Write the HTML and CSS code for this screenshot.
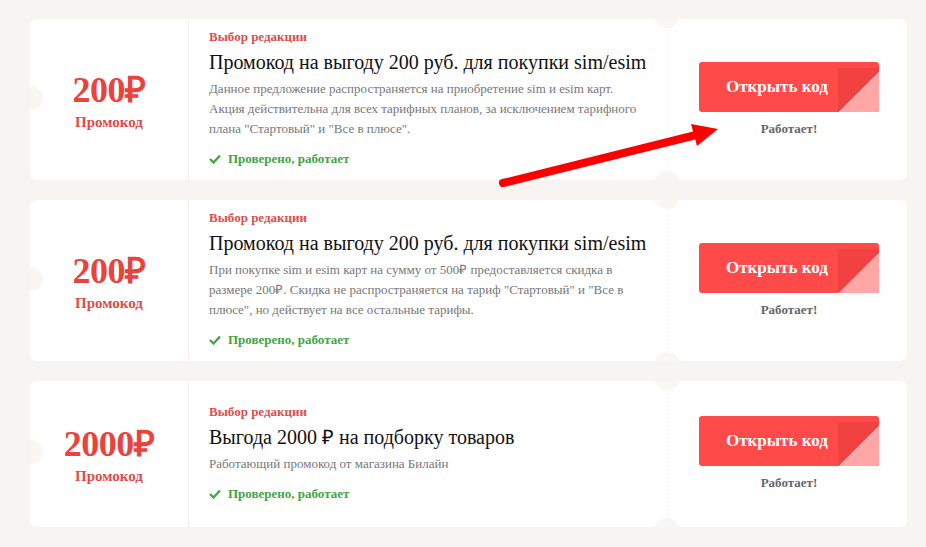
FILE: index.html
```html
<!DOCTYPE html>
<html lang="ru">
<head>
<meta charset="utf-8">
<link rel="stylesheet" href="styles.css">
</head>
<body>
<div class="list">
  <div class="card">
    <span class="notch notch-left"></span>
    <span class="notch notch-top"></span>
    <span class="notch notch-bottom"></span>
    <div class="amount">
      <div class="value">200₽</div>
      <div class="kind">Промокод</div>
    </div>
    <div class="info">
      <div class="label">Выбор редакции</div>
      <div class="title">Промокод на выгоду 200 руб. для покупки sim/esim</div>
      <div class="desc">Данное предложение распространяется на приобретение sim и esim карт. Акция действительна для всех тарифных планов, за исключением тарифного плана "Стартовый" и "Все в плюсе".</div>
      <div class="checked"><svg class="tick" viewBox="0 0 12 10" width="12" height="10"><polyline points="1,5 4.5,8.5 11,1.5" fill="none" stroke="#45a845" stroke-width="2.4"/></svg>Проверено, работает</div>
    </div>
    <div class="action">
      <div class="btn">Открыть код</div>
      <div class="works">Работает!</div>
    </div>
  </div>
  <div class="card">
    <span class="notch notch-left"></span>
    <span class="notch notch-top"></span>
    <span class="notch notch-bottom"></span>
    <div class="amount">
      <div class="value">200₽</div>
      <div class="kind">Промокод</div>
    </div>
    <div class="info">
      <div class="label">Выбор редакции</div>
      <div class="title">Промокод на выгоду 200 руб. для покупки sim/esim</div>
      <div class="desc">При покупке sim и esim карт на сумму от 500₽ предоставляется скидка в размере 200₽. Скидка не распространяется на тариф "Стартовый" и "Все в плюсе", но действует на все остальные тарифы.</div>
      <div class="checked"><svg class="tick" viewBox="0 0 12 10" width="12" height="10"><polyline points="1,5 4.5,8.5 11,1.5" fill="none" stroke="#45a845" stroke-width="2.4"/></svg>Проверено, работает</div>
    </div>
    <div class="action">
      <div class="btn">Открыть код</div>
      <div class="works">Работает!</div>
    </div>
  </div>
  <div class="card">
    <span class="notch notch-left"></span>
    <span class="notch notch-top"></span>
    <span class="notch notch-bottom"></span>
    <div class="amount">
      <div class="value">2000₽</div>
      <div class="kind">Промокод</div>
    </div>
    <div class="info">
      <div class="label">Выбор редакции</div>
      <div class="title">Выгода 2000 ₽ на подборку товаров</div>
      <div class="desc">Работающий промокод от магазина Билайн</div>
      <div class="checked"><svg class="tick" viewBox="0 0 12 10" width="12" height="10"><polyline points="1,5 4.5,8.5 11,1.5" fill="none" stroke="#45a845" stroke-width="2.4"/></svg>Проверено, работает</div>
    </div>
    <div class="action">
      <div class="btn">Открыть код</div>
      <div class="works">Работает!</div>
    </div>
  </div>
</div>
<svg class="arrow" width="926" height="547" viewBox="0 0 926 547">
  <line x1="503" y1="183" x2="696" y2="135" stroke="#ff0000" stroke-width="8" stroke-linecap="round"/>
  <polygon points="718,129 691,124 697,146" fill="#ff0000"/>
</svg>
</body>
</html>
```
FILE: styles.css
```css
* { box-sizing: border-box; }
html, body { margin: 0; padding: 0; }
body {
  background: #f6f5f1;
  font-family: "Liberation Serif", "Times New Roman", serif;
  width: 926px;
  height: 547px;
  overflow: hidden;
  position: relative;
}
.list {
  display: flex;
  flex-direction: column;
  gap: 20px;
  padding: 19px 19px 0 30px;
}
.card {
  position: relative;
  background: #fff;
  border-radius: 7px;
  display: grid;
  grid-template-columns: 159px 478px 240px;
  min-height: 146px;
  overflow: hidden;
}
.notch {
  position: absolute;
  background: #f8f7f4;
  border-radius: 50%;
}
.notch-left { width: 24px; height: 24px; left: -11px; top: calc(50% - 14px); }
.notch-top { width: 26px; height: 26px; left: 624px; top: -17px; }
.notch-bottom { width: 26px; height: 26px; left: 624px; bottom: -17px; }
.amount {
  border-right: 1px solid #f0efec;
  display: flex;
  flex-direction: column;
  align-items: center;
  justify-content: center;
  color: #e8433d;
  font-weight: bold;
  padding-top: 2px;
}
.value { font-size: 36px; line-height: 40px; letter-spacing: -0.5px; }
.kind { font-size: 15px; line-height: 20px; color: #e04c48; margin-top: 2px; }
.info {
  padding: 9px 0 12px 20px;
  display: flex;
  flex-direction: column;
  justify-content: center;
}
.label { color: #dc4f4b; font-weight: bold; font-size: 13px; line-height: 18px; }
.title { color: #111; font-size: 20px; line-height: 26px; margin-top: 3px; white-space: nowrap; }
.desc { color: #777; font-size: 13px; line-height: 20px; margin-top: 4px; padding-right: 20px; }
.checked {
  margin-top: 11px;
  color: #43a543;
  font-weight: bold;
  font-size: 13px;
  line-height: 18px;
  display: flex;
  align-items: center;
}
.tick { margin-right: 7px; }
.action {
  border-left: 2px dotted #fafafa;
  display: flex;
  flex-direction: column;
  align-items: center;
  justify-content: center;
  gap: 8px;
  padding-left: 2px;
}
.btn {
  position: relative;
  width: 180px;
  height: 50px;
  border-radius: 3px;
  background: #ff4a4a;
  color: #fff;
  font-weight: bold;
  font-size: 17px;
  display: flex;
  align-items: center;
  padding-left: 27px;
  overflow: hidden;
}
.btn::before {
  content: "";
  position: absolute;
  right: 0;
  top: 6px;
  bottom: 0;
  width: 41px;
  background: #f24141;
}
.btn::after {
  content: "";
  position: absolute;
  right: 0;
  bottom: 0;
  width: 41px;
  height: 40px;
  background: linear-gradient(to top left, #ffa6a6 50%, transparent 50%);
}
.works { color: #666; font-weight: bold; font-size: 13px; line-height: 18px; }
.arrow { position: absolute; left: 0; top: 0; pointer-events: none; }
```
